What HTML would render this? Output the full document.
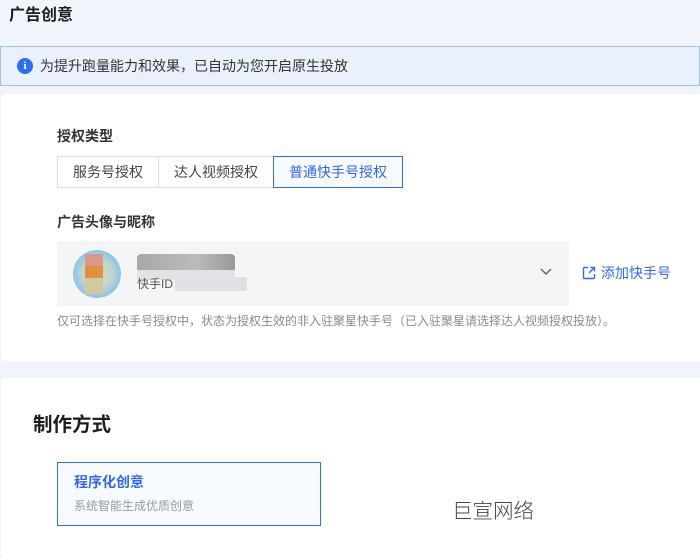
<!DOCTYPE html>
<html><head><meta charset="utf-8"><style>
*{margin:0;padding:0;box-sizing:border-box}
body{width:700px;height:550px;overflow:hidden;background:#f0f4fb;font-family:"Liberation Sans","Noto Sans CJK SC",sans-serif;position:relative;color:#222}
.a{position:absolute;white-space:nowrap}
</style></head><body>
<div class="a" style="left:9px;top:6px;font-size:16px;font-weight:bold;line-height:20px;color:#1d1d1d">广告创意</div>
<div class="a" style="left:0;top:46px;width:700px;height:40px;background:#eaf1fd;border:1px solid #a3c1f7"></div>
<div class="a" style="left:17px;top:58px;width:16px;height:16px;border-radius:50%;background:#2e6ef0;color:#fff;font-size:11px;font-weight:bold;text-align:center;line-height:16px;font-family:'Liberation Serif',serif">i</div>
<div class="a" style="left:40px;top:57px;font-size:14px;line-height:18px;color:#333">为提升跑量能力和效果，已自动为您开启原生投放</div>
<div class="a" style="left:1px;top:94px;width:705px;height:267px;background:#fff;border-radius:4px"></div>
<div class="a" style="left:57px;top:127px;font-size:14px;font-weight:bold;line-height:18px;color:#333">授权类型</div>
<div class="a" style="left:57px;top:156px;width:102px;height:32px;border:1px solid #ddd;font-size:14px;line-height:30px;text-align:center;color:#444">服务号授权</div>
<div class="a" style="left:158px;top:156px;width:116px;height:32px;border:1px solid #ddd;font-size:14px;line-height:30px;text-align:center;color:#444">达人视频授权</div>
<div class="a" style="left:273px;top:156px;width:130px;height:32px;border:1px solid #2f6bef;background:#f7faff;font-size:14px;line-height:30px;text-align:center;color:#3366ee">普通快手号授权</div>
<div class="a" style="left:57px;top:213px;font-size:14px;font-weight:bold;line-height:18px;color:#333">广告头像与昵称</div>
<div class="a" style="left:57px;top:241px;width:512px;height:65px;background:#f4f5f7"></div>
<div class="a" style="left:73px;top:250px;width:48px;height:48px;border-radius:50%;background:radial-gradient(circle,#c8d8c8 40%,#8fc3ea 70%,#5aaee8)"></div>
<div class="a" style="left:85px;top:254px;width:18px;height:40px;background:linear-gradient(#d89a8c 0 30%,#e09040 30% 60%,#d4c8a0 60%)"></div>
<div class="a" style="left:137px;top:254px;width:98px;height:18px;border-radius:4px;background:linear-gradient(90deg,#a8a8a8,#bbb 60%,#999)"></div>
<div class="a" style="left:137px;top:270px;width:98px;height:10px;background:#e2e2e4"></div>
<div class="a" style="left:137px;top:276px;font-size:12px;line-height:16px;color:#555">快手ID</div>
<div class="a" style="left:175px;top:277px;width:72px;height:14px;background:#e0e1e4"></div>
<svg class="a" style="left:539px;top:267px" width="14" height="10"><path d="M2 2l5 5 5-5" stroke="#666" stroke-width="1.5" fill="none"/></svg>
<svg class="a" style="left:582px;top:266px" width="14" height="14"><path d="M6 1.5H2.5a1 1 0 0 0-1 1v9a1 1 0 0 0 1 1h9a1 1 0 0 0 1-1V8M8.5 1.5h4v4M12.5 1.5L7 7" stroke="#2f6bef" stroke-width="1.4" fill="none"/></svg>
<div class="a" style="left:601px;top:264px;font-size:14px;line-height:18px;color:#2f6bef">添加快手号</div>
<div class="a" style="left:57px;top:313px;font-size:12px;line-height:16px;color:#8a8a8a">仅可选择在快手号授权中，状态为授权生效的非入驻聚星快手号（已入驻聚星请选择达人视频授权投放）。</div>
<div class="a" style="left:1px;top:378px;width:705px;height:180px;background:#fff;border-radius:4px"></div>
<div class="a" style="left:33px;top:413px;font-size:19.5px;font-weight:bold;line-height:24px;color:#1d1d1d">制作方式</div>
<div class="a" style="left:57px;top:462px;width:264px;height:64px;border:1px solid #2f6bef;background:#f7fbff"></div>
<div class="a" style="left:74px;top:473px;font-size:14px;font-weight:bold;line-height:18px;color:#3366ee">程序化创意</div>
<div class="a" style="left:74px;top:498px;font-size:12px;line-height:16px;color:#999">系统智能生成优质创意</div>
<div class="a" style="left:452px;top:499px;font-size:20.5px;line-height:26px;color:#444;font-weight:300">巨宣网络</div>
</body></html>
